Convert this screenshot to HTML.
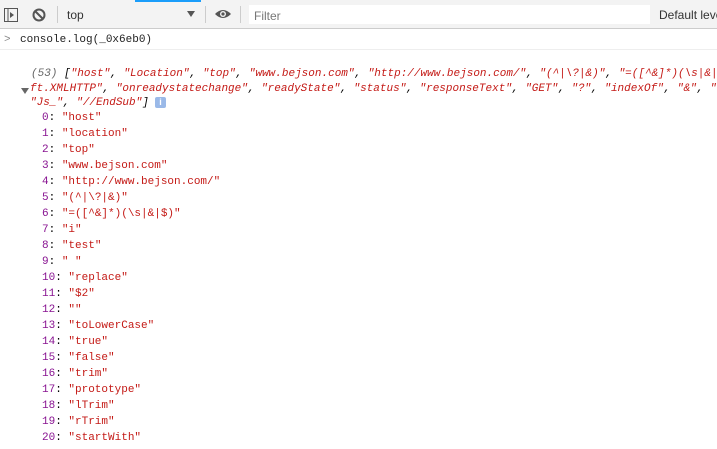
<!DOCTYPE html>
<html><head><style>
body{margin:0;width:717px;height:449px;overflow:hidden;background:#fff;font-family:"Liberation Sans",sans-serif;position:relative}
.tb{position:absolute;left:0;top:0;width:717px;height:28px;background:#f3f3f3;border-bottom:1px solid #ccc}
.blue{position:absolute;left:135px;top:0;width:66px;height:2px;background:#1a9dfa}
.m{font-family:"Liberation Mono",monospace;font-size:11px;white-space:pre;position:absolute}
.s{color:#c41a16}.k{color:#881391}
.it{font-style:italic}
</style></head><body>
<div class="tb">
<div class="blue"></div>
<svg style="position:absolute;left:4px;top:8px" width="14" height="14"><rect x="0.5" y="0.5" width="13" height="13" fill="none" stroke="#555"/><line x1="4" y1="1" x2="4" y2="13" stroke="#555"/><path d="M6 4 L10 7 L6 10Z" fill="#555"/></svg>
<svg style="position:absolute;left:32px;top:8px" width="14" height="14"><circle cx="7" cy="7" r="5.5" fill="none" stroke="#555" stroke-width="2"/><line x1="3" y1="3" x2="11" y2="11" stroke="#555" stroke-width="2"/></svg>
<div style="position:absolute;left:57px;top:6px;width:1px;height:17px;background:#ccc"></div>
<div style="position:absolute;left:67px;top:8px;font-size:12px;color:#333">top</div>
<div style="position:absolute;left:187px;top:11px;width:0;height:0;border-left:4px solid transparent;border-right:4px solid transparent;border-top:6px solid #555"></div>
<div style="position:absolute;left:205px;top:6px;width:1px;height:17px;background:#ccc"></div>
<svg style="position:absolute;left:214px;top:8px" width="18" height="12"><path d="M1 6 Q9 -2 17 6 Q9 14 1 6Z" fill="#555"/><circle cx="9" cy="6" r="3" fill="#f3f3f3"/><circle cx="9" cy="6" r="1.6" fill="#555"/></svg>
<div style="position:absolute;left:240px;top:6px;width:1px;height:17px;background:#ccc"></div>
<div style="position:absolute;left:249px;top:5px;width:401px;height:19px;background:#fff"></div>
<div style="position:absolute;left:254px;top:9px;font-size:12px;color:#777">Filter</div>
<div style="position:absolute;left:659px;top:8px;font-size:12px;color:#333;white-space:nowrap">Default levels</div>
</div>
<div style="position:absolute;left:0;top:49px;width:717px;height:1px;background:#eee"></div>
<div class="m" style="left:4px;top:34px;color:#888">&gt;</div>
<div class="m" style="left:20px;top:34px;color:#222">console.log(_0x6eb0)</div>
<div class="m it" style="left:31px;top:68px"><span style="color:#666">(53) </span>[<span class="s">"host"</span>, <span class="s">"Location"</span>, <span class="s">"top"</span>, <span class="s">"www.bejson.com"</span>, <span class="s">"http://www.bejson.com/"</span>, <span class="s">"(^|\?|&amp;)"</span>, <span class="s">"=([^&amp;]*)(\s|&amp;|$)"</span></div>
<div style="position:absolute;left:21px;top:88px;width:0;height:0;border-left:4px solid transparent;border-right:4px solid transparent;border-top:6px solid #666"></div>
<div class="m it" style="left:30px;top:83px"><span class="s">ft.XMLHTTP"</span>, <span class="s">"onreadystatechange"</span>, <span class="s">"readyState"</span>, <span class="s">"status"</span>, <span class="s">"responseText"</span>, <span class="s">"GET"</span>, <span class="s">"?"</span>, <span class="s">"indexOf"</span>, <span class="s">"&amp;"</span>, <span class="s">"</span></div>
<div class="m it" style="left:30px;top:97px"><span class="s">"Js_"</span>, <span class="s">"//EndSub"</span>]</div>
<div style="position:absolute;left:155px;top:97px;width:11px;height:11px;background:#9ab9e8;border-radius:2px;color:#fff;font-size:9px;font-weight:bold;text-align:center;line-height:11px">i</div>
<div class="m" style="left:42px;top:110px;line-height:16px"><span class="k">0</span>: <span class="s">"host"</span>
<span class="k">1</span>: <span class="s">"location"</span>
<span class="k">2</span>: <span class="s">"top"</span>
<span class="k">3</span>: <span class="s">"www.bejson.com"</span>
<span class="k">4</span>: <span class="s">"http://www.bejson.com/"</span>
<span class="k">5</span>: <span class="s">"(^|\?|&amp;)"</span>
<span class="k">6</span>: <span class="s">"=([^&amp;]*)(\s|&amp;|$)"</span>
<span class="k">7</span>: <span class="s">"i"</span>
<span class="k">8</span>: <span class="s">"test"</span>
<span class="k">9</span>: <span class="s">" "</span>
<span class="k">10</span>: <span class="s">"replace"</span>
<span class="k">11</span>: <span class="s">"$2"</span>
<span class="k">12</span>: <span class="s">""</span>
<span class="k">13</span>: <span class="s">"toLowerCase"</span>
<span class="k">14</span>: <span class="s">"true"</span>
<span class="k">15</span>: <span class="s">"false"</span>
<span class="k">16</span>: <span class="s">"trim"</span>
<span class="k">17</span>: <span class="s">"prototype"</span>
<span class="k">18</span>: <span class="s">"lTrim"</span>
<span class="k">19</span>: <span class="s">"rTrim"</span>
<span class="k">20</span>: <span class="s">"startWith"</span></div>
</body></html>
